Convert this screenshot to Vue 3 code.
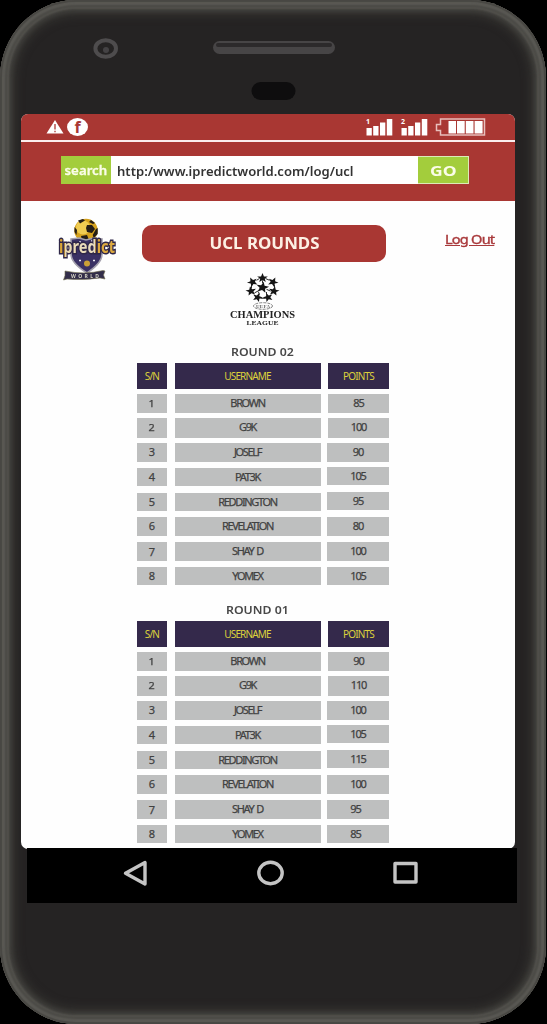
<script setup>
const names = ['BROWN', 'G9K', 'JOSELF', 'PAT3K', 'REDDINGTON', 'REVELATION', 'SHAY D', 'YOMEX']
const rounds = [
  { title: 'ROUND 02', points: [85, 100, 90, 105, 95, 80, 100, 105], shifted: [] },
  { title: 'ROUND 01', points: [90, 110, 100, 105, 115, 100, 95, 85], shifted: [6, 7] },
]
const star = '0,-4.6 1.2,-1.5 4.4,-1.4 1.9,.6 2.7,3.7 0,1.9 -2.7,3.7 -1.9,.6 -4.4,-1.4 -1.2,-1.5'
const stars = [
  [15, 15, 1.25, 10], [15, 4.5, 1.05, 0], [5, 9, 1.05, -25], [25.5, 9, 1.05, 25], [3.5, 19, 1.05, -10],
  [26.5, 19, 1.05, 10], [10, 26, 1, 20], [20.5, 26, 1, -20],
]
</script>

<template>
  <main class="phone">
    <div class="bezel"></div>
    <header class="top">
      <svg class="hardware" viewBox="0 0 547 114">
        <ellipse cx="105.7" cy="48.5" rx="10.3" ry="8.3" fill="none" stroke="#4e4c4d" stroke-width="4" />
        <circle cx="106" cy="50" r="3" fill="#444244" />
        <rect x="213" y="41" width="122" height="13" rx="6.5" fill="#474546" />
        <rect x="216" y="43" width="116" height="4" rx="2" fill="#2c2a2b" />
        <rect x="251.500" y="82" width="44" height="18" rx="9" fill="#0e0d0e" />
      </svg>
    </header>

    <section class="screen">
      <div class="status">
        <svg class="alert" viewBox="0 0 18 14">
          <path d="M9 0 17.500 13.500H.5Z" fill="#fff" />
          <path d="M9 4v5.500M9 10.800v1.500" stroke="#a93733" stroke-width="1.300" />
        </svg>
        <span class="fb"><b>f</b></span>
        <span class="grow"></span>
        <svg v-for="n in 2" :key="n" class="signal" viewBox="0 0 27 18">
          <text x="0" y="6">{{ n }}</text>
          <path d="M.5 10h5.300v7.500H.5zM7.200 8h5.300v9.500H7.200zM14 4.500h5.300v13H14zM20.800 1h5.500v16.500h-5.500z" fill="#fff" />
        </svg>
        <svg class="battery" viewBox="0 0 52 18">
          <path d="M6.500 1H50.500V17H6.500V12.500H2.500V6.500H6.500Z" fill="none" stroke="#e8bfbc" stroke-width="1.500" />
          <path d="M14.500 3h7.500v12.500h-7.500zM23 3h7.700v12.500H23zM31.800 3h7.700v12.500h-7.700zM40.600 3h8v12.500h-8z" fill="#fff" />
        </svg>
      </div>
      <div class="address">
        <div class="search">
          <span class="label"><b>search</b></span>
          <span class="url"><b>http:/www.ipredictworld.com/log/ucl</b></span>
          <span class="go"><b>GO</b></span>
        </div>
      </div>

      <div class="page">
        <div class="masthead">
          <svg class="logo" viewBox="0 0 64 66">
            <defs>
              <linearGradient id="brandFill" x1="0" x2="1" y1="0" y2="0">
                <stop offset=".1" stop-color="#d9a536" />
                <stop offset=".11" stop-color="#ead9b0" />
                <stop offset=".64" stop-color="#e8dcc0" />
                <stop offset=".65" stop-color="#dca93f" />
              </linearGradient>
            </defs>
            <circle cx="29" cy="13.500" r="11.700" fill="#d5a21e" />
            <circle cx="26" cy="10.500" r="7" fill="#f0cc52" />
            <path d="M30 8l5 0 3 4-3 4-5-1-1-4zM21 3.500l5-1.500 2 1.500-5 3zM17.500 10l2.500 3-.5 5-2-3zM39 12l1.700-1 0 6-4 4-1-3zM24 19l6-1 2 5-7 0zM34 3l4 3-2 1-4-2z" fill="#241d16" />
            <path d="M14 22l8-1 7 2 8-2 8 1v15c0 8-8 14-15 19-8-5-16-11-16-19z" fill="#3a3164" stroke="#a4a1ad" stroke-width="1.600" />
            <circle cx="30" cy="46.500" r="3" fill="#caa137" />
            <path d="M22 25h2M34 24h2M22 43.500h2M36 43.500h2" stroke="#e8e6ef" stroke-width="1.500" />
            <text class="brand" x="2" y="36" textLength="56" lengthAdjust="spacingAndGlyphs">ipredict</text>
            <path d="M8 54q20 4 38-.5l2 .5-1.500 4 1.500 4-5-1q-16 2.500-33 1l-3.500 1 1.500-4.500z" fill="#332e4a" stroke="#74704f" stroke-width=".6" />
            <text class="world" x="14" y="60.500" textLength="28">WORLD</text>
          </svg>
          <h1><span>UCL ROUNDS</span></h1>
          <a class="logout"><span>Log Out</span></a>
        </div>
        <svg class="league" viewBox="0 0 70 54">
          <g transform="translate(17.500 -1) scale(1 .9)">
            <polygon v-for="([x, y, s, a], i) in stars" :key="i" :points="star" :transform="`translate(${x} ${y}) rotate(${a}) scale(${s * 1.15})`" fill="#151515" />
            <path d="M9 7l3-2M18 5l4 2M12 18l-5 3M19 17l4 2M15 10v-3M13 27h5M4 12v4M27 12v4M11 20l1 3M19 20v3" stroke="#222" stroke-width="1" />
          </g>
          <ellipse cx="33" cy="31" rx="9.500" ry="3.300" fill="none" stroke="#777" stroke-width=".9" stroke-dasharray="3 1" />
          <text class="uefa" x="26" y="33" textLength="14">UEFA</text>
          <text class="champ" x="0" y="43" textLength="65" lengthAdjust="spacingAndGlyphs">CHAMPIONS</text>
          <text class="leag" x="16.500" y="49.500" textLength="32" lengthAdjust="spacingAndGlyphs">LEAGUE</text>
        </svg>

        <section v-for="(r, k) in rounds" :key="r.title" class="round" :class="{ second: k === 1 }">
          <h2><span>{{ r.title }}</span></h2>
          <div class="row head">
            <span><i>S/N</i></span><span><i>USERNAME</i></span><span><i>POINTS</i></span>
          </div>
          <div v-for="(n, i) in names" :key="n" class="row">
            <span class="num"><i :class="{ small: i < 2, low: i === 6 }">{{ i + 1 }}</i></span>
            <span class="name"><i>{{ n }}</i></span>
            <span class="pts" :class="{ raised: i === 3 || i === 4, wide: i > 1, shifted: r.shifted.includes(i) }"><i>{{ r.points[i] }}</i></span>
          </div>
        </section>
      </div>
    </section>

    <nav class="nav">
      <svg viewBox="0 0 490 55" fill="none" stroke="#c4c4c4" stroke-width="3.400">
        <path d="M118 14.500V36L98.500 25.200Z" stroke-linejoin="round" />
        <ellipse cx="243.500" cy="25" rx="11.700" ry="10.700" />
        <rect x="368" y="15.500" width="21" height="18.500" stroke-linejoin="round" />
      </svg>
    </nav>
  </main>
</template>

<style>
html, body { margin: 0; background: #000; }
</style>

<style scoped>
* { box-sizing: border-box; }
i { font-style: normal; }
.phone {
  position: relative;
  width: 547px;
  height: 1024px;
  overflow: hidden;
  background: #000;
  font-family: "Noto Sans", "Open Sans", sans-serif;
  color: #444;
}
.bezel {
  position: absolute;
  inset: 0 1px 0 0;
  border-radius: 76px / 78px;
  background: #252323;
  box-shadow:
    inset 0 0 1px 2px #484743,
    inset 0 0 2px 5px #5a5954,
    inset 0 0 2px 7px #4a4945,
    inset 0 0 2px 9px #54534e,
    inset 0 0 4px 12px #403f3c,
    inset 0 0 9px 16px #343330;
}
.top, .screen, .nav { position: relative; }
.top { height: 114px; }
.hardware { display: block; width: 547px; height: 114px; filter: blur(.6px); }
.screen {
  width: 494px;
  height: 734.500px;
  margin-left: 21px;
  border-radius: 7px;
  overflow: hidden;
  background: #fefefe;
}
.status {
  display: flex;
  height: 27.500px;
  padding: 0 29px 0 25px;
  background: #a93733;
  border-bottom: 2.500px solid #fbeeee;
  align-items: center;
}
.alert { width: 18px; height: 14px; }
.fb {
  display: flex;
  width: 21px;
  height: 18px;
  margin-left: 3px;
  border-radius: 50%;
  background: #fff;
  color: #a93733;
  font-size: 16px;
  line-height: 18px;
  justify-content: center;
}
.grow { flex: 1; }
.signal { width: 27px; height: 18px; margin-right: 8px; overflow: visible; }
.signal text { font: bold 7px "Noto Sans", sans-serif; fill: #fff; }
.battery { width: 52px; height: 18px; margin-left: -2px; }
.address { height: 59.500px; padding: 14.500px 0 0 40px; background: #a93733; }
.search { display: flex; width: 408px; height: 28px; background: #fff; line-height: 28px; }
.label { width: 50px; background: #a3cd3c; color: #fbfde8; font-size: 13px; text-align: center; -webkit-text-stroke: .3px #fbfde8; }
.label b { display: inline-block; transform: scaleX(1.02); font-weight: 600; }
.url { flex: 1; padding-left: 6px; color: #333; font-size: 12.300px; line-height: 31px; white-space: nowrap; }
.url b { display: inline-block; font-weight: 600; transform: scaleX(1.063); transform-origin: left; }
.go {
  width: 51px;
  border: 1px solid #dceab8;
  border-left: 0;
  background: #a3cd3c;
  color: #fbfde8;
  font-size: 15px;
  line-height: 26px;
  text-align: center;
}
.go b { display: inline-block; transform: scaleX(1.17); }
.page { height: 647.500px; }
.masthead { display: flex; height: 74px; align-items: flex-start; }
.logo { width: 64px; height: 66px; margin: 16px 0 0 36px; filter: blur(.35px); overflow: visible; }
.brand {
  font: bold 18px "Noto Sans", sans-serif;
  fill: url(#brandFill);
  stroke: #2f2748;
  stroke-width: 3px;
  paint-order: stroke;
}
.world { font: bold 5px "Noto Sans", sans-serif; fill: #d5d3c4; }
h1 {
  width: 244px;
  height: 37px;
  margin: 23.500px 0 0 21px;
  border-radius: 10px;
  background: #a93733;
  color: #fdf0e4;
  font: bold 15.500px/36px "Noto Sans", sans-serif;
  text-align: center;
}
h1 span { display: inline-block; transform: scaleX(1.09); }
.logout {
  margin: 28px 0 0 58.500px;
  color: #a93a3c;
  font-size: 13px;
  line-height: 20px;
  white-space: nowrap;
  -webkit-text-stroke: .4px #a93a3c;
}
.logout span { display: inline-block; letter-spacing: -.700px; transform: scaleX(1.12); transform-origin: left; text-decoration: underline; }
.league { display: block; width: 70px; height: 54px; margin-left: 208.500px; filter: blur(.3px); overflow: visible; }
.league text { font-family: "Liberation Serif", serif; font-weight: bold; fill: #222; }
.league .champ { font-size: 10px; }
.league .leag { font-size: 6.500px; }
.league .uefa { font-size: 5px; fill: #666; }
.round { width: 252px; margin-left: 116px; }
h2 {
  height: 34px;
  margin: 0;
  padding: 11px 0 0 94px;
  color: #484848;
  font: 600 11.500px/24px "Noto Sans", sans-serif;
  white-space: nowrap;
}
h2 span { display: inline-block; transform: scaleX(1.07); transform-origin: left; }
.second h2 { height: 29.500px; padding: 6.500px 0 0 89px; }
.row {
  display: grid;
  grid-template-columns: 30px 146px 61px;
  justify-content: space-between;
  height: 18.500px;
  margin-bottom: 6.250px;
  color: #414141;
  font-size: 11px;
  line-height: 18.500px;
  text-align: center;
}
.row > span { background: #bebfbf; white-space: nowrap; }
.row i { display: inline-block; letter-spacing: -1.350px; word-spacing: 1.500px; -webkit-text-stroke: .25px currentColor; }
.head { height: 26px; margin-bottom: 4.500px; color: #ddd23b; font-size: 10px; line-height: 26px; }
.head > span { background: #34294b; }
.head i { letter-spacing: -.850px; -webkit-text-stroke: 0; }
.row .num i { letter-spacing: 0; }
.row .num .small { font-size: 9px; transform: scaleX(1.2); }
.row .num .low { transform: translateY(1px); }
.row .pts i { letter-spacing: -1.100px; }
.row .pts.wide { margin-left: -1px; }
.row .raised { transform: translateY(-1px); }
.row .shifted { padding-right: 5px; }
.nav { width: 490px; height: 55px; margin: -.500px 0 0 27px; background: #000; }
.nav svg { display: block; width: 490px; height: 55px; filter: blur(.4px); }
</style>
